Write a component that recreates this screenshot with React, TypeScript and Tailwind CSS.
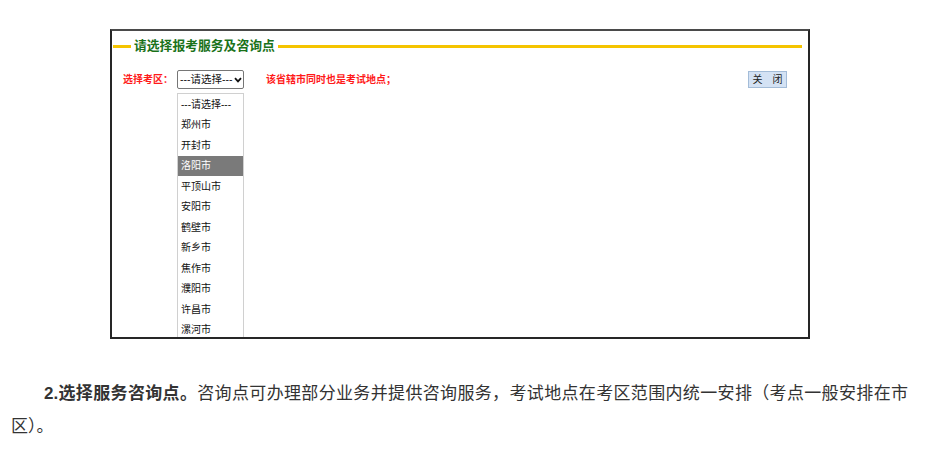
const cities = [
  '---请选择---',
  '郑州市',
  '开封市',
  '洛阳市',
  '平顶山市',
  '安阳市',
  '鹤壁市',
  '新乡市',
  '焦作市',
  '濮阳市',
  '许昌市',
  '漯河市',
  '三门峡市',
];

const cjk = { fontFamily: '"Liberation Sans", "Noto Sans CJK SC", sans-serif' };

function ChevronDown() {
  return (
    <svg width="8" height="6" viewBox="0 0 8 6" className="ml-[2px]">
      <path d="M1 1.2 L4 4.4 L7 1.2" fill="none" stroke="#111" strokeWidth="1.8" />
    </svg>
  );
}

export default function App() {
  return (
    <div className="bg-white w-[939px] h-[451px] overflow-hidden" style={cjk}>
      {/* frame */}
      <div className="relative ml-[110px] mt-[29px] w-[700px] h-[310px] border-2 border-[#262626] border-t-[#4a4a4a] overflow-hidden">
        <div className="flex items-center h-[17px] mt-[7px] pl-[1px] pr-[6px]">
          <div className="w-[18px] h-[3px] bg-[#f5c400]" />
          <span className="px-[3px] text-[12.8px] leading-none font-bold text-[#1a721a]">请选择报考服务及咨询点</span>
          <div className="flex-1 h-[3px] bg-[#f5c400]" />
        </div>

        <div className="flex items-center mt-[15px] pl-[11px] pr-[21px] h-[19px]">
          <span className="text-[10px] font-bold text-[#ff1a1a] w-[54px]">选择考区：</span>
          <div className="flex items-center w-[67px] h-[19px] border border-[#767676] rounded-[2px] pl-[2px] text-[10.5px] text-[#111]">
            <span>---请选择---</span>
            <ChevronDown />
          </div>
          <span className="ml-[22px] text-[10px] font-bold text-[#ff1a1a]">该省辖市同时也是考试地点；</span>
          <div className="flex-1" />
          <div className="flex items-center justify-center gap-[10px] w-[39px] h-[17px] bg-[#d4e2f4] border border-[#a3bcd8] text-[10px] text-[#222]">
            <span>关</span>
            <span>闭</span>
          </div>
        </div>

        {/* open dropdown list */}
        <div className="absolute left-[65px] top-[62px] w-[67px] bg-white border border-[#d0d0d0]">
          {cities.map((c) => (
            <div
              key={c}
              className={
                c === '洛阳市'
                  ? 'h-[20.5px] flex items-center pl-[3px] text-[10px] bg-[#7a7a7a] text-white'
                  : 'h-[20.5px] flex items-center pl-[3px] text-[10px] text-[#111]'
              }
            >
              {c}
            </div>
          ))}
        </div>
      </div>

      <p className="mt-[38px] ml-[11px] w-[897px] text-[17px] leading-[33px] text-[#333] text-justify indent-[33px]">
        <b>2.选择服务咨询点。</b>咨询点可办理部分业务并提供咨询服务，考试地点在考区范围内统一安排（考点一般安排在市区）。
      </p>
    </div>
  );
}
